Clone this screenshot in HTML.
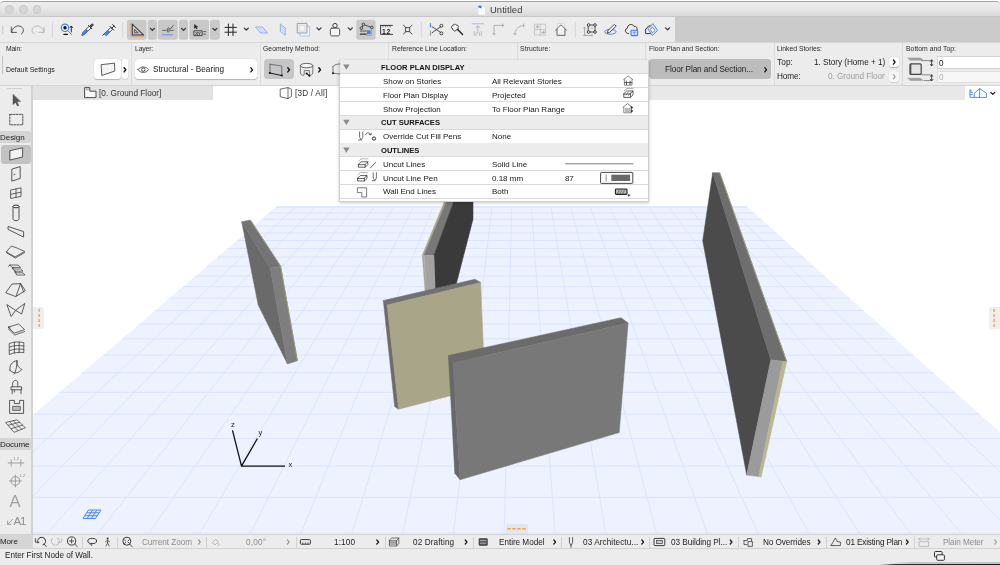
<!DOCTYPE html>
<html><head><meta charset="utf-8"><title>Untitled</title><style>
html,body{margin:0;padding:0}
body{width:1000px;height:565px;overflow:hidden;position:relative;background:#fff;-webkit-font-smoothing:antialiased;font-family:"Liberation Sans",sans-serif;color:#222}
div,span,svg{position:absolute;box-sizing:border-box}
svg{will-change:transform}
.t{white-space:nowrap;line-height:1;letter-spacing:0;will-change:transform}
.sep{width:1px;background:#cfcfcf}
</style></head><body>
<svg width="1000" height="565" viewBox="0 0 1000 565" style="left:0;top:0">
<defs><clipPath id="cv"><rect x="33" y="100" width="967" height="434"/></clipPath></defs>
<g clip-path="url(#cv)">
<polygon points="277.071,206 746.34,206 1188.27,600 -182.909,600" fill="#edf2fe"/>
<path d="M-208.73,622.118 H1213.08 M-152.632,574.066 H1159.19 M-104.589,532.915 H1113.03 M-62.9846,497.278 H1073.06 M-26.6047,466.116 H1038.1 M5.47659,438.637 H1007.28 M33.9785,414.223 H979.896 M59.4685,392.389 H955.406 M82.4,372.747 H933.374 M103.14,354.982 H913.448 M121.988,338.838 H895.339 M139.192,324.102 H878.81 M154.957,310.598 H863.663 M169.458,298.177 H849.731 M182.84,286.714 H836.874 M195.228,276.103 H824.972 M206.729,266.252 H813.923 M217.435,257.082 H803.637 M227.425,248.525 H794.039 M236.769,240.521 H785.061 M245.528,233.019 H776.646 M253.754,225.972 H768.742 M261.496,219.341 H761.304 M268.794,213.089 H754.292 M275.687,207.186 H747.67 M296.624,206 L-125.776,600 M316.176,206 L-68.6433,600 M335.729,206 L-11.5107,600 M355.282,206 L45.6219,600 M374.835,206 L102.755,600 M394.388,206 L159.887,600 M413.941,206 L217.02,600 M433.494,206 L274.152,600 M453.047,206 L331.285,600 M472.6,206 L388.418,600 M492.153,206 L445.55,600 M511.705,206 L502.683,600 M531.258,206 L559.816,600 M550.811,206 L616.948,600 M570.364,206 L674.081,600 M589.917,206 L731.213,600 M609.47,206 L788.346,600 M629.023,206 L845.479,600 M648.576,206 L902.611,600 M668.129,206 L959.744,600 M687.682,206 L1016.88,600 M707.235,206 L1074.01,600 M726.787,206 L1131.14,600" stroke="#d9e2fc" stroke-width="0.85" fill="none"/>
<path d="M277.071,206.5 H746.34" stroke="#dfe7fc" stroke-width="1" fill="none"/>
<polygon points="448.6,195 456.1,195 434,255.2 423.3,255.2" fill="#787878" stroke="#787878" stroke-width="0.5" stroke-linejoin="round" />
<polygon points="447.1,195 448.8,195 423.6,255.2 426.8,295 425.4,295 422.3,255.2" fill="#a9a587" stroke="#a9a587" stroke-width="0.5" stroke-linejoin="round" />
<polygon points="456.1,195 473,195 473,219.2 456.4,283.4 435.3,294 434,255.2" fill="#3a3a3a" stroke="#3a3a3a" stroke-width="0.5" stroke-linejoin="round" />
<polygon points="424.3,255.5 433.8,255.5 435.3,294 426.6,295" fill="#a2a2a2" stroke="#a2a2a2" stroke-width="0.5" stroke-linejoin="round" />
<polygon points="241.7,221.7 270.3,268.5 287.5,364 258.2,305" fill="#6a6a6a" stroke="#6a6a6a" stroke-width="0.5" stroke-linejoin="round" />
<polygon points="241.7,221.7 250.3,220 280.5,266 270.3,268.5" fill="#747474" stroke="#747474" stroke-width="0.5" stroke-linejoin="round" />
<polygon points="270.3,268.5 280.5,266 297.4,360.8 287.5,364" fill="#7e7e7e" stroke="#7e7e7e" stroke-width="0.5" stroke-linejoin="round" />
<path d="M250.3,220 L280.5,266 L297.4,360.8" stroke="#9c9877" stroke-width="1" fill="none"/>
<polygon points="383.3,300.5 474.8,279.3 480.9,282.5 387.2,305" fill="#717171" stroke="#717171" stroke-width="0.5" stroke-linejoin="round" />
<polygon points="383.3,300.5 387.2,305 398.6,409.3 394.7,406.6" fill="#6c6c6c" stroke="#6c6c6c" stroke-width="0.5" stroke-linejoin="round" />
<polygon points="387.2,305 480.6,282.5 485,386.7 398.6,409.3" fill="#a8a588" stroke="#a8a588" stroke-width="0.5" stroke-linejoin="round" />
<polygon points="448.4,355.5 621,317.7 628.1,323 453,363" fill="#6b6b6b" stroke="#6b6b6b" stroke-width="0.5" stroke-linejoin="round" />
<polygon points="448.4,355.5 453,363 460.1,479.7 454.8,473.3" fill="#686868" stroke="#686868" stroke-width="0.5" stroke-linejoin="round" />
<polygon points="453,363 628.1,323 619.2,432.6 460.1,479.7" fill="#787878" stroke="#787878" stroke-width="0.5" stroke-linejoin="round" />
<polygon points="712.7,172.7 770.8,359.8 746.7,475.1 702.7,240.7" fill="#4b4b4b" stroke="#4b4b4b" stroke-width="0.5" stroke-linejoin="round" />
<polygon points="712.7,172.7 719.7,172.7 786.7,361.6 770.8,359.8" fill="#6e6e6e" stroke="#6e6e6e" stroke-width="0.5" stroke-linejoin="round" />
<polygon points="770.8,359.8 782.8,361.6 758.7,476.6 746.7,475.1" fill="#9b9b9b" stroke="#9b9b9b" stroke-width="0.5" stroke-linejoin="round" />
<polygon points="782.8,361.6 786.7,361.6 761.1,477.2 758.7,476.6" fill="#b9b690" stroke="#b9b690" stroke-width="0.5" stroke-linejoin="round" />
<path d="M719.7,172.7 L786.7,361.6" stroke="#a39f7c" stroke-width="1" fill="none"/>
<path d="M232.5,430.4 L241.5,466.1 L257.4,438.5 M241.5,466.1 H285" stroke="#111" stroke-width="1.3" fill="none" stroke-linejoin="round"/>
<text x="231" y="426.5" font-size="7.5" fill="#222" font-family='"Liberation Sans", sans-serif'>z</text>
<text x="258.5" y="435" font-size="7.5" fill="#222" font-family='"Liberation Sans", sans-serif'>y</text>
<text x="288.5" y="466.5" font-size="7.5" fill="#222" font-family='"Liberation Sans", sans-serif'>x</text>
<path d="M88.5,510 H101 L95.5,518.5 H83 Z M92.6,510 L87.1,518.5 M96.8,510 L91.3,518.5 M86.7,512.8 H99.2 M84.8,515.7 H97.3" stroke="#3f7df0" stroke-width="0.9" fill="#e6eeff"/>
</g>
</svg>
<div style="left:33px;top:307px;width:11.1px;height:22px;background:#eeeeee;border-radius:0 2.5px 2.5px 0"></div>
<svg width="12" height="24" style="left:33px;top:306px"><path d="M6.2,3 V22" stroke="#f2a456" stroke-width="1.4" stroke-dasharray="3,2" fill="none"/></svg>
<div style="left:989.1px;top:307px;width:10.9px;height:22px;background:#eeeeee;border-radius:2.5px 0 0 2.5px"></div>
<svg width="12" height="24" style="left:988px;top:306px"><path d="M6.1,3 V22" stroke="#f2a456" stroke-width="1.4" stroke-dasharray="3,2" fill="none"/></svg>
<div style="left:505.9px;top:523.8px;width:22px;height:10.4px;background:#e1e6ef;border-radius:2.5px 2.5px 0 0"></div>
<svg width="26" height="12" style="left:504px;top:522px"><path d="M3.3,6.75 H22" stroke="#f2a456" stroke-width="1.3" stroke-dasharray="3.5,1.45" fill="none"/></svg>
<div style="left:0px;top:1px;width:1000px;height:16.2px;background:linear-gradient(#eeeeee,#e5e5e5 55%,#d9d9d9);border-top:1.2px solid #98a5bf;border-radius:4px 4px 0 0;border-bottom:1px solid #c6c6c6"></div>
<div style="left:5.3px;top:5.3px;width:8.4px;height:8.4px;background:#d6d6d6;border-radius:50%;border:0.5px solid #cacaca"></div>
<div style="left:19.2px;top:5.3px;width:8.4px;height:8.4px;background:#d6d6d6;border-radius:50%;border:0.5px solid #cacaca"></div>
<div style="left:33.1px;top:5.3px;width:8.4px;height:8.4px;background:#d6d6d6;border-radius:50%;border:0.5px solid #cacaca"></div>
<svg width="10" height="11" style="left:476.5px;top:4.5px"><path d="M1,0.5 H6 L8.5,3 V10 H1 Z" fill="#fafafa" stroke="#d8d8d8" stroke-width="0.5"/><path d="M1.2,0.8 H4.5 V3.6 L1.2,2.2Z" fill="#3b6fe0"/></svg>
<div style="left:0px;top:17.2px;width:675px;height:25.4px;background:#ececec;"></div>
<div style="left:675px;top:16.8px;width:325px;height:25.8px;background:#cbcbcb;"></div>
<div style="left:0px;top:42.3px;width:1000px;height:0.8px;background:#d6d6d6;"></div>
<div style="left:0px;top:43px;width:1000px;height:42.2px;background:#ececec;"></div>
<div style="left:0px;top:85px;width:1000px;height:0.8px;background:#d4d4d4;"></div>
<div style="left:0px;top:86px;width:33px;height:15px;background:#ececec;"></div>
<div style="left:33px;top:85.8px;width:180px;height:14.4px;background:#e2e2e2;"></div>
<div style="left:213px;top:86px;width:130px;height:14px;background:#ffffff;"></div>
<div style="left:648px;top:86px;width:317px;height:14px;background:#e8e8e8;"></div>
<div style="left:965px;top:86px;width:35px;height:14px;background:#ffffff;"></div>
<div style="left:0px;top:86px;width:32px;height:463px;background:#ececec;"></div>
<div style="left:31px;top:86px;width:2px;height:448px;background:#d2d2d2;"></div>
<div style="left:0px;top:534px;width:1000px;height:15px;background:#ececec;border-top:1px solid #d2d2d2"></div>
<div style="left:0px;top:548.4px;width:1000px;height:16.6px;background:#ececec;border-top:1px solid #d2d2d2"></div>
<div style="left:880px;top:563.6px;width:120px;height:1.4px;background:linear-gradient(to right,rgba(30,30,30,0),rgba(30,30,30,.9) 12%,#1a1a1a);"></div>
<div style="left:890px;top:562.4px;width:110px;height:1.2px;background:linear-gradient(to right,rgba(120,120,120,0),rgba(120,120,120,.35) 20%);"></div>
<span class="t" style="left:490px;top:5.295px;font-size:9.4px;color:#3c3c3c;font-weight:normal;letter-spacing:0.079px;">Untitled</span>
<span class="t" style="left:6.25px;top:45.89px;font-size:6.8px;color:#2a2a2a;font-weight:normal;letter-spacing:-0.175px;">Main:</span>
<span class="t" style="left:135px;top:45.89px;font-size:6.8px;color:#2a2a2a;font-weight:normal;letter-spacing:-0.150px;">Layer:</span>
<span class="t" style="left:263px;top:45.89px;font-size:6.8px;color:#2a2a2a;font-weight:normal;letter-spacing:0.043px;">Geometry Method:</span>
<span class="t" style="left:391.75px;top:45.89px;font-size:6.8px;color:#2a2a2a;font-weight:normal;letter-spacing:-0.025px;">Reference Line Location:</span>
<span class="t" style="left:520px;top:45.89px;font-size:6.8px;color:#2a2a2a;font-weight:normal;letter-spacing:0.102px;">Structure:</span>
<span class="t" style="left:648.75px;top:45.89px;font-size:6.8px;color:#2a2a2a;font-weight:normal;letter-spacing:-0.008px;">Floor Plan and Section:</span>
<span class="t" style="left:777px;top:45.89px;font-size:6.8px;color:#2a2a2a;font-weight:normal;letter-spacing:0.001px;">Linked Stories:</span>
<span class="t" style="left:905.5px;top:45.89px;font-size:6.8px;color:#2a2a2a;font-weight:normal;letter-spacing:0.041px;">Bottom and Top:</span>
<div style="left:130.8px;top:43px;width:1px;height:42px;background:#dcdcdc;"></div>
<div style="left:259.8px;top:43px;width:1px;height:42px;background:#dcdcdc;"></div>
<div style="left:388.2px;top:43px;width:1px;height:42px;background:#dcdcdc;"></div>
<div style="left:516.8px;top:43px;width:1px;height:42px;background:#dcdcdc;"></div>
<div style="left:645.4px;top:43px;width:1px;height:42px;background:#dcdcdc;"></div>
<div style="left:774px;top:43px;width:1px;height:42px;background:#dcdcdc;"></div>
<div style="left:902.2px;top:43px;width:1px;height:42px;background:#dcdcdc;"></div>
<div style="left:2px;top:56px;width:1px;height:18px;background:#c4c4c4;"></div>
<span class="t" style="left:6.25px;top:66.8325px;font-size:6.9px;color:#222;font-weight:normal;letter-spacing:0.003px;">Default Settings</span>
<div style="left:94px;top:59.3px;width:27.2px;height:20px;background:#ffffff;border-radius:3.5px;box-shadow:0 0.5px 1px rgba(0,0,0,.25)"></div>
<div style="left:121.8px;top:59.3px;width:6.4px;height:20px;background:#ffffff;border-radius:2.5px;box-shadow:0 0.5px 1px rgba(0,0,0,.25)"></div>
<div style="left:134.6px;top:59.3px;width:122px;height:20px;background:#ffffff;border-radius:3.5px;box-shadow:0 0.5px 1px rgba(0,0,0,.25)"></div>
<span class="t" style="left:153px;top:66.085px;font-size:8.2px;color:#222;font-weight:normal;letter-spacing:0.031px;">Structural - Bearing</span>
<div style="left:263.5px;top:59.2px;width:30px;height:20px;background:#c6c6c8;border-radius:3.5px"></div>
<div style="left:648.5px;top:59.2px;width:122.5px;height:20px;background:#bcbcbc;border-radius:3.5px"></div>
<span class="t" style="left:664.5px;top:65.885px;font-size:8.2px;color:#222;font-weight:normal;letter-spacing:-0.072px;">Floor Plan and Section...</span>
<span class="t" style="left:777px;top:59.185px;font-size:8.2px;color:#222;font-weight:normal;letter-spacing:0.126px;">Top:</span>
<span class="t" style="left:813.75px;top:59.185px;font-size:8.2px;color:#222;font-weight:normal;letter-spacing:-0.027px;">1. Story (Home + 1)</span>
<span class="t" style="left:777px;top:73.385px;font-size:8.2px;color:#222;font-weight:normal;letter-spacing:-0.080px;">Home:</span>
<span class="t" style="left:828.25px;top:73.385px;font-size:8.2px;color:#9c9c9c;font-weight:normal;letter-spacing:-0.045px;">0. Ground Floor</span>
<div style="left:888.5px;top:56.5px;width:10.5px;height:10.5px;background:#ffffff;border-radius:3px;box-shadow:0 0.5px 1px rgba(0,0,0,.25)"></div>
<div style="left:888.5px;top:71px;width:10.5px;height:10.5px;background:#f6f6f6;border-radius:3px;box-shadow:0 0.5px 1px rgba(0,0,0,.12)"></div>
<div style="left:936.5px;top:56px;width:64px;height:12.5px;background:#ffffff;border:1px solid #d4d4d4;border-right:none"></div>
<div style="left:936.5px;top:70.5px;width:64px;height:12px;background:#f7f7f7;border:1px solid #dedede;border-right:none"></div>
<span class="t" style="left:938.75px;top:59.685px;font-size:8.2px;color:#222;font-weight:normal;letter-spacing:-0.310px;">0</span>
<span class="t" style="left:938.75px;top:74.085px;font-size:8.2px;color:#b0b0b0;font-weight:normal;letter-spacing:-0.310px;">0</span>
<span class="t" style="left:98.75px;top:89.785px;font-size:8.2px;color:#333;font-weight:normal;letter-spacing:0.031px;">[0. Ground Floor]</span>
<span class="t" style="left:294.5px;top:89.785px;font-size:8.2px;color:#333;font-weight:normal;letter-spacing:0.197px;">[3D / All]</span>
<div style="left:0px;top:130.5px;width:31px;height:12.5px;background:#d5d5d5;border-radius:0 2px 2px 0"></div>
<span class="t" style="left:0.3px;top:133.5px;font-size:8px;color:#222;font-weight:normal;letter-spacing:-0.034px;">Design</span>
<div style="left:1px;top:145px;width:30px;height:18.5px;background:#c2c2c2;border-radius:3px"></div>
<div style="left:0px;top:437.5px;width:31px;height:12.5px;background:#d5d5d5;border-radius:0 2px 2px 0"></div>
<span class="t" style="left:0.3px;top:440.5px;font-size:8px;color:#222;font-weight:normal;letter-spacing:-0.065px;">Docume</span>
<div style="left:0px;top:535px;width:32.5px;height:14px;background:#d5d5d5;"></div>
<span class="t" style="left:0.3px;top:538.2px;font-size:8px;color:#222;font-weight:normal;letter-spacing:-0.131px;">More</span>
<div style="left:7px;top:88px;width:15px;height:1px;background:#cfcfcf;"></div>
<span class="t" style="left:142px;top:539.085px;font-size:8.2px;color:#8c8c8c;font-weight:normal;letter-spacing:-0.048px;">Current Zoom</span>
<span class="t" style="left:246px;top:539.085px;font-size:8.2px;color:#8c8c8c;font-weight:normal;letter-spacing:0.203px;">0,00°</span>
<span class="t" style="left:333.75px;top:539.085px;font-size:8.2px;color:#222;font-weight:normal;letter-spacing:0.146px;">1:100</span>
<span class="t" style="left:412.5px;top:539.085px;font-size:8.2px;color:#222;font-weight:normal;letter-spacing:0.104px;">02 Drafting</span>
<span class="t" style="left:499px;top:539.085px;font-size:8.2px;color:#222;font-weight:normal;letter-spacing:-0.044px;">Entire Model</span>
<span class="t" style="left:583.25px;top:539.085px;font-size:8.2px;color:#222;font-weight:normal;letter-spacing:0.079px;">03 Architectu...</span>
<span class="t" style="left:671.25px;top:539.085px;font-size:8.2px;color:#222;font-weight:normal;letter-spacing:-0.043px;">03 Building Pl...</span>
<span class="t" style="left:762.5px;top:539.085px;font-size:8.2px;color:#222;font-weight:normal;letter-spacing:-0.067px;">No Overrides</span>
<span class="t" style="left:846.25px;top:539.085px;font-size:8.2px;color:#222;font-weight:normal;letter-spacing:-0.159px;">01 Existing Plan</span>
<span class="t" style="left:942.5px;top:539.085px;font-size:8.2px;color:#8c8c8c;font-weight:normal;letter-spacing:-0.088px;">Plain Meter</span>
<div style="left:82px;top:537px;width:1px;height:11px;background:#d0d0d0;"></div>
<div style="left:116.5px;top:537px;width:1px;height:11px;background:#d0d0d0;"></div>
<div style="left:206px;top:537px;width:1px;height:11px;background:#d0d0d0;"></div>
<div style="left:295.5px;top:537px;width:1px;height:11px;background:#d0d0d0;"></div>
<div style="left:384.5px;top:537px;width:1px;height:11px;background:#d0d0d0;"></div>
<div style="left:473px;top:537px;width:1px;height:11px;background:#d0d0d0;"></div>
<div style="left:561px;top:537px;width:1px;height:11px;background:#d0d0d0;"></div>
<div style="left:649px;top:537px;width:1px;height:11px;background:#d0d0d0;"></div>
<div style="left:737.5px;top:537px;width:1px;height:11px;background:#d0d0d0;"></div>
<div style="left:825.75px;top:537px;width:1px;height:11px;background:#d0d0d0;"></div>
<div style="left:913.75px;top:537px;width:1px;height:11px;background:#d0d0d0;"></div>
<span class="t" style="left:5px;top:552.485px;font-size:8.2px;color:#222;font-weight:normal;letter-spacing:-0.040px;">Enter First Node of Wall.</span>
<div style="left:338.8px;top:59.5px;width:309.8px;height:142.5px;background:#ffffff;border:1px solid #cfcfcf;box-shadow:0 1px 3px rgba(0,0,0,.22)"></div>
<div style="left:339.8px;top:60.3px;width:307.8px;height:13.53px;background:#ececec;"></div>
<span class="t" style="left:381.3px;top:64.0565px;font-size:7.58px;color:#111;font-weight:bold;letter-spacing:0.000px;">FLOOR PLAN DISPLAY</span>
<div style="left:339.8px;top:73.43px;width:307.8px;height:0.9px;background:#d9d9d9;"></div>
<span class="t" style="left:382.9px;top:77.845px;font-size:8px;color:#151515;font-weight:normal;letter-spacing:0.000px;">Show on Stories</span>
<span class="t" style="left:492.4px;top:77.845px;font-size:8px;color:#151515;font-weight:normal;letter-spacing:-0.000px;">All Relevant Stories</span>
<div style="left:339.8px;top:87.26px;width:307.8px;height:0.9px;background:#d9d9d9;"></div>
<span class="t" style="left:382.9px;top:91.675px;font-size:8px;color:#151515;font-weight:normal;letter-spacing:0.000px;">Floor Plan Display</span>
<span class="t" style="left:492.4px;top:91.675px;font-size:8px;color:#151515;font-weight:normal;letter-spacing:-0.000px;">Projected</span>
<div style="left:339.8px;top:101.09px;width:307.8px;height:0.9px;background:#d9d9d9;"></div>
<span class="t" style="left:382.9px;top:105.505px;font-size:8px;color:#151515;font-weight:normal;letter-spacing:-0.000px;">Show Projection</span>
<span class="t" style="left:492.4px;top:105.505px;font-size:8px;color:#151515;font-weight:normal;letter-spacing:-0.000px;">To Floor Plan Range</span>
<div style="left:339.8px;top:114.92px;width:307.8px;height:0.9px;background:#d9d9d9;"></div>
<div style="left:339.8px;top:115.62px;width:307.8px;height:13.53px;background:#ececec;"></div>
<span class="t" style="left:381.3px;top:119.377px;font-size:7.58px;color:#111;font-weight:bold;letter-spacing:0.000px;">CUT SURFACES</span>
<div style="left:339.8px;top:128.75px;width:307.8px;height:0.9px;background:#d9d9d9;"></div>
<span class="t" style="left:382.9px;top:133.165px;font-size:8px;color:#151515;font-weight:normal;letter-spacing:0.000px;">Override Cut Fill Pens</span>
<span class="t" style="left:492.4px;top:133.165px;font-size:8px;color:#151515;font-weight:normal;letter-spacing:-0.000px;">None</span>
<div style="left:339.8px;top:142.58px;width:307.8px;height:0.9px;background:#d9d9d9;"></div>
<div style="left:339.8px;top:143.28px;width:307.8px;height:13.53px;background:#ececec;"></div>
<span class="t" style="left:381.3px;top:147.037px;font-size:7.58px;color:#111;font-weight:bold;letter-spacing:0.000px;">OUTLINES</span>
<div style="left:339.8px;top:156.41px;width:307.8px;height:0.9px;background:#d9d9d9;"></div>
<span class="t" style="left:382.9px;top:160.825px;font-size:8px;color:#151515;font-weight:normal;letter-spacing:-0.000px;">Uncut Lines</span>
<span class="t" style="left:492.4px;top:160.825px;font-size:8px;color:#151515;font-weight:normal;letter-spacing:-0.000px;">Solid Line</span>
<div style="left:339.8px;top:170.24px;width:307.8px;height:0.9px;background:#d9d9d9;"></div>
<span class="t" style="left:382.9px;top:174.655px;font-size:8px;color:#151515;font-weight:normal;letter-spacing:-0.000px;">Uncut Line Pen</span>
<span class="t" style="left:492.4px;top:174.655px;font-size:8px;color:#151515;font-weight:normal;letter-spacing:-0.000px;">0.18 mm</span>
<div style="left:339.8px;top:184.07px;width:307.8px;height:0.9px;background:#d9d9d9;"></div>
<span class="t" style="left:382.9px;top:188.485px;font-size:8px;color:#151515;font-weight:normal;letter-spacing:-0.000px;">Wall End Lines</span>
<span class="t" style="left:492.4px;top:188.485px;font-size:8px;color:#151515;font-weight:normal;letter-spacing:0.000px;">Both</span>
<div style="left:339.8px;top:197.9px;width:307.8px;height:0.9px;background:#d9d9d9;"></div>
<span class="t" style="left:564.5px;top:174.655px;font-size:8px;color:#151515;font-weight:normal;letter-spacing:-0.199px;">87</span>
<svg width="1000" height="565" viewBox="0 0 1000 565" style="left:0;top:0">
<rect x="126.9" y="19.8" width="19.6" height="20" rx="2.5" fill="#c9c9c9"/>
<rect x="147.75" y="19.8" width="9.15" height="20" rx="2.5" fill="#c9c9c9"/>
<rect x="157.9" y="19.8" width="19.85" height="20" rx="2.5" fill="#c9c9c9"/>
<rect x="179" y="19.8" width="9" height="20" rx="2.5" fill="#c9c9c9"/>
<rect x="189.4" y="19.8" width="19.6" height="20" rx="2.5" fill="#c9c9c9"/>
<rect x="210" y="19.8" width="9.75" height="20" rx="2.5" fill="#c9c9c9"/>
<rect x="356.25" y="19.8" width="19.35" height="20" rx="2.5" fill="#c9c9c9"/>
<path d="M2.75,25.6 V34.4" stroke="#c4c4c4" stroke-width="0.86" fill="none" stroke-linecap="round" stroke-linejoin="round" />
<path d="M52.5,22.5 V37" stroke="#d2d2d2" stroke-width="0.86" fill="none" stroke-linecap="round" stroke-linejoin="round" />
<path d="M122.6,22.5 V37" stroke="#d2d2d2" stroke-width="0.86" fill="none" stroke-linecap="round" stroke-linejoin="round" />
<path d="M421.25,22.5 V37" stroke="#d2d2d2" stroke-width="0.86" fill="none" stroke-linecap="round" stroke-linejoin="round" />
<path d="M575.3,22.5 V37" stroke="#d2d2d2" stroke-width="0.86" fill="none" stroke-linecap="round" stroke-linejoin="round" />
<path d="M11.3,27 V32.4 H16.4 M11.6,32 C12.6,27.6 16.6,25 20,26.2 C24,27.6 24.6,31.6 21.4,34" stroke="#444" stroke-width="0.9" fill="none" stroke-linecap="round" stroke-linejoin="round" />
<path d="M44.1,27 V32.4 H39 M43.8,32 C42.8,27.6 38.8,25 35.4,26.2 C31.4,27.6 30.8,31.6 34,34" stroke="#b4b4b4" stroke-width="0.9" fill="none" stroke-linecap="round" stroke-linejoin="round" />
<circle cx="65" cy="27.8" r="3.7" fill="none" stroke="#3f7df0" stroke-width="1.1"/>
<circle cx="65" cy="27.8" r="1.7" fill="#111"/>
<path d="M67.8,30.6 L71.6,34.6" stroke="#3f7df0" stroke-width="0.95" fill="none" stroke-linecap="round" stroke-linejoin="round" />
<path d="M71.3,26.3 V32 M70,27.6 L71.3,26 L72.6,27.6" stroke="#111" stroke-width="0.86" fill="none" stroke-linecap="round" stroke-linejoin="round" />
<path d="M63.8,34.3 H67.5" stroke="#111" stroke-width="1.2" fill="none" stroke-linecap="round" stroke-linejoin="round" />
<path d="M82,35 L83,32.4 L89.2,26.2 L91,28 L84.8,34.2 Z" stroke="#2a2a2a" stroke-width="0.86" fill="#ffffff" stroke-linecap="round" stroke-linejoin="round" />
<path d="M82.3,34.8 L83.2,32.6 L86.6,29.2 L88.2,30.8 L84.8,34.2 Z" stroke="#3f7df0" stroke-width="0.52" fill="#3f7df0" stroke-linecap="round" stroke-linejoin="round" />
<path d="M88.4,25.4 L91.8,28.8 M89.6,26.4 L91.6,24.2 C92.4,23.3 93.8,24.7 92.9,25.5 L90.8,27.6" stroke="#2a2a2a" stroke-width="0.95" fill="#555" stroke-linecap="round" stroke-linejoin="round" />
<path d="M102.6,35.4 L105,33 M104.6,33.6 L110.8,27.4 L112.6,29.2 L106.4,35.4 Z" stroke="#2a2a2a" stroke-width="0.86" fill="#ffffff" stroke-linecap="round" stroke-linejoin="round" />
<path d="M105,33.4 L108.2,30.2 L109.8,31.8 L106.6,35 Z" stroke="#3f7df0" stroke-width="0.52" fill="#3f7df0" stroke-linecap="round" stroke-linejoin="round" />
<path d="M110,26.4 L113.6,30 M111.8,28.2 L114,26 M112.6,24.6 L115.4,27.4" stroke="#2a2a2a" stroke-width="0.95" fill="none" stroke-linecap="round" stroke-linejoin="round" />
<path d="M132.2,24 V35 H143.6 Z" stroke="#2a2a2a" stroke-width="1.03" fill="none" stroke-linecap="round" stroke-linejoin="round" />
<path d="M134.6,29.6 V32.8 H137.8 Z" stroke="#2a2a2a" stroke-width="0.69" fill="none" stroke-linecap="round" stroke-linejoin="round" />
<path d="M131,23.4 V36.2 H144" stroke="#f0903a" stroke-width="0.86" fill="none" stroke-linecap="round" stroke-linejoin="round" stroke-dasharray="1.2,1.2"/>
<path d="M150.4,28.4 l2,2 l2,-2" stroke="#333" stroke-width="1.3" fill="none" stroke-linecap="round" stroke-linejoin="round"/>
<path d="M162.6,30.3 H166.4 M167.6,28.6 V32 M169,28.6 V32 M170,30.3 H173.4" stroke="#555" stroke-width="0.86" fill="none" stroke-linecap="round" stroke-linejoin="round" />
<path d="M168.6,27.6 L170.4,29 L173.4,25.2" stroke="#555" stroke-width="0.86" fill="none" stroke-linecap="round" stroke-linejoin="round" />
<path d="M162.6,34.8 H173.4" stroke="#3f7df0" stroke-width="0.86" fill="none" stroke-linecap="round" stroke-linejoin="round" stroke-dasharray="1.6,1.1"/>
<path d="M181.5,28.4 l2,2 l2,-2" stroke="#333" stroke-width="1.3" fill="none" stroke-linecap="round" stroke-linejoin="round"/>
<path d="M194.2,30.8 H202.2 V35.6 H194.2 Z" stroke="#333" stroke-width="0.86" fill="none" stroke-linecap="round" stroke-linejoin="round" />
<text x="195.2" y="34.8" font-size="4.4" font-weight="bold" fill="#333" font-family='"Liberation Sans",sans-serif'>XY</text>
<path d="M194.4,24.6 V28.4 L195.6,27.4 L196.6,29 L197.2,28.6 L196.3,27.1 L197.6,26.9 Z" stroke="#222" stroke-width="0.43" fill="#222" stroke-linecap="round" stroke-linejoin="round" />
<path d="M204,31.6 H205.4 M204,34.2 H205.4" stroke="#333" stroke-width="0.86" fill="none" stroke-linecap="round" stroke-linejoin="round" />
<path d="M212.9,28.4 l2,2 l2,-2" stroke="#333" stroke-width="1.3" fill="none" stroke-linecap="round" stroke-linejoin="round"/>
<path d="M228.4,24 V35.6 M233,24 V35.6 M225,27.4 H236.4 M225,32.2 H236.4" stroke="#222" stroke-width="0.99" fill="none" stroke-linecap="round" stroke-linejoin="round" />
<path d="M244.3,28.1 l2,2 l2,-2" stroke="#333" stroke-width="1.3" fill="none" stroke-linecap="round" stroke-linejoin="round"/>
<path d="M256,27 H262.6 L267.6,33 H261 Z" stroke="#79a6f5" stroke-width="0.86" fill="#dfe9fd" stroke-linecap="round" stroke-linejoin="round" />
<path d="M259,29 H263 M260.6,31 H264.6" stroke="#a8c4f8" stroke-width="0.6" fill="none" stroke-linecap="round" stroke-linejoin="round" />
<path d="M280.6,24.2 L285.2,28 V35.4 L280.6,31.6 Z" stroke="#79a6f5" stroke-width="0.86" fill="#dfe9fd" stroke-linecap="round" stroke-linejoin="round" />
<path d="M281.6,27 L284.2,29.2 M281.6,29.4 L284.2,31.6" stroke="#a8c4f8" stroke-width="0.6" fill="none" stroke-linecap="round" stroke-linejoin="round" />
<path d="M300.4,26.2 H309.6 V36 H300.4 Z" stroke="#9cc0fa" stroke-width="0.86" fill="#eef4ff" stroke-linecap="round" stroke-linejoin="round" />
<path d="M297.6,23.4 H307 V33 H297.6 Z" stroke="#9a9a9a" stroke-width="0.95" fill="#ededed" stroke-linecap="round" stroke-linejoin="round" />
<path d="M299.6,25.4 H305 V31 H299.6 Z" stroke="#cfcfcf" stroke-width="0.69" fill="#f4f4f4" stroke-linecap="round" stroke-linejoin="round" />
<path d="M317,27.9 l2,2 l2,-2" stroke="#333" stroke-width="1.3" fill="none" stroke-linecap="round" stroke-linejoin="round"/>
<circle cx="335" cy="25.6" r="2.2" fill="none" stroke="#3c3c3c" stroke-width="1"/>
<path d="M331.8,28.2 H338.2 C339.2,28.2 339.6,28.8 339.6,29.8 V34.4 C339.6,35.4 339,35.9 338,35.9 H332 C331,35.9 330.4,35.4 330.4,34.4 V29.8 C330.4,28.8 330.8,28.2 331.8,28.2 Z" stroke="#3c3c3c" stroke-width="0.86" fill="#f6f6f6" stroke-linecap="round" stroke-linejoin="round" />
<path d="M348.3,27.9 l2,2 l2,-2" stroke="#333" stroke-width="1.3" fill="none" stroke-linecap="round" stroke-linejoin="round"/>
<path d="M361.6,27.8 L363.4,24.6 L371.6,27.4" stroke="#333" stroke-width="0.86" fill="none" stroke-linecap="round" stroke-linejoin="round" />
<circle cx="361.4" cy="28.2" r="1.3" fill="#c9c9c9" stroke="#333" stroke-width="0.9"/>
<circle cx="363.4" cy="24.4" r="1.3" fill="#c9c9c9" stroke="#333" stroke-width="0.9"/>
<circle cx="371.8" cy="27.4" r="1.3" fill="#c9c9c9" stroke="#333" stroke-width="0.9"/>
<path d="M360.4,31 H366.4" stroke="#333" stroke-width="0.77" fill="none" stroke-linecap="round" stroke-linejoin="round" />
<path d="M360.4,34.2 H366.2" stroke="#333" stroke-width="1.2" fill="none" stroke-linecap="round" stroke-linejoin="round" stroke-dasharray="1.2,0.7"/>
<rect x="367" y="30.4" width="3.6" height="3.6" fill="#3f7df0"/>
<path d="M371.4,30 V35 M367,35.2 H371" stroke="#3f7df0" stroke-width="0.6" fill="none" stroke-linecap="round" stroke-linejoin="round" stroke-dasharray="0.9,0.9"/>
<path d="M380.6,25.4 H392.4 M380.6,25.4 V34.4 H392.6" stroke="#333" stroke-width="0.95" fill="none" stroke-linecap="round" stroke-linejoin="round" />
<path d="M383,25.4 V26.8 M385.4,25.4 V26.8 M387.8,25.4 V26.8 M390.2,25.4 V26.8" stroke="#333" stroke-width="0.6" fill="none" stroke-linecap="round" stroke-linejoin="round" />
<text x="382" y="33.6" font-size="6.8" font-weight="bold" letter-spacing="0.6" fill="#222" font-family='"Liberation Sans",sans-serif'>12</text>
<path d="M403.4,25.2 L406,27.6 M412,25.2 L409.4,27.6 M403.4,34 L406,31.6 M412,34 L409.4,31.6" stroke="#333" stroke-width="0.86" fill="none" stroke-linecap="round" stroke-linejoin="round" />
<path d="M405.8,27.6 H409.6 V31.6 H405.8 Z" stroke="#333" stroke-width="0.86" fill="none" stroke-linecap="round" stroke-linejoin="round" />
<path d="M430.4,23.6 V27" stroke="#3f7df0" stroke-width="1.03" fill="none" stroke-linecap="round" stroke-linejoin="round" />
<path d="M430.4,31 V35.6" stroke="#999" stroke-width="1.03" fill="none" stroke-linecap="round" stroke-linejoin="round" />
<path d="M432,26.6 L440.6,32.4 M432,32.8 L440.6,26.8" stroke="#333" stroke-width="0.86" fill="none" stroke-linecap="round" stroke-linejoin="round" />
<circle cx="441.4" cy="33.4" r="1.5" fill="none" stroke="#333" stroke-width="0.9"/>
<circle cx="441.4" cy="25.8" r="1.5" fill="none" stroke="#333" stroke-width="0.9"/>
<path d="M452.2,28.6 C450.6,27.4 451.4,25.6 453,25.8 C453,24 455.4,23.6 456,25.2 C457.6,24.4 459,26 458,27.4 C459,28.6 458,30.2 456.4,29.8 C455.8,31.6 453.6,31.4 453.4,29.8 C452.6,29.8 452.2,29.2 452.2,28.6 Z" stroke="#333" stroke-width="0.86" fill="#f4f4f4" stroke-linecap="round" stroke-linejoin="round" />
<path d="M457.4,29.2 L462.6,34.4" stroke="#222" stroke-width="1.38" fill="none" stroke-linecap="round" stroke-linejoin="round" />
<path d="M472,23.8 H483.6" stroke="#8db4f7" stroke-width="0.86" fill="none" stroke-linecap="round" stroke-linejoin="round" />
<path d="M477.8,26 V33.4 M476,27.8 L477.8,25.8 L479.6,27.8" stroke="#aaa" stroke-width="0.77" fill="none" stroke-linecap="round" stroke-linejoin="round" />
<path d="M474.2,31.4 V35.6 M476,32.6 V35.6 M479.6,32.6 V35.6 M481.4,31.4 V35.6" stroke="#b4b4b4" stroke-width="0.77" fill="none" stroke-linecap="round" stroke-linejoin="round" />
<path d="M494,35 V25.4 H503.6 M502.6,24 V26.8 M492.8,33.8 H495.2" stroke="#a8a8a8" stroke-width="0.86" fill="none" stroke-linecap="round" stroke-linejoin="round" />
<path d="M514.8,35 C514.8,29.6 518.4,25.6 524.6,25.4 M523.4,24 V26.8 M513.6,33.8 H516" stroke="#a8a8a8" stroke-width="0.86" fill="none" stroke-linecap="round" stroke-linejoin="round" />
<path d="M534.8,24.2 H545.6 V35 H534.8 Z M540.2,24.2 V35 M534.8,29.6 H545.6" stroke="#bcbcbc" stroke-width="0.77" fill="none" stroke-linecap="round" stroke-linejoin="round" />
<path d="M537.4,25.4 V28.2 M536,26.8 H538.8 M541.6,32.4 H544.4 M543.2,31 L544.6,32.4 L543.2,33.8" stroke="#9a9a9a" stroke-width="0.69" fill="none" stroke-linecap="round" stroke-linejoin="round" />
<path d="M557.6,23.4 H564.4 V35.2 H557.6 Z" stroke="#d4d4d4" stroke-width="0.77" fill="#f2f2f2" stroke-linecap="round" stroke-linejoin="round" />
<path d="M555.4,30.2 L561,24.8 L566.6,30.2 M557,29.4 V35.4 H565 V29.4" stroke="#555" stroke-width="0.82" fill="none" stroke-linecap="round" stroke-linejoin="round" />
<path d="M588.6,25 H595 V32 H588.6 Z" stroke="#333" stroke-width="0.86" fill="none" stroke-linecap="round" stroke-linejoin="round" />
<circle cx="588.6" cy="25" r="1.35" fill="#ececec" stroke="#333" stroke-width="0.9"/>
<circle cx="595" cy="25" r="1.35" fill="#ececec" stroke="#333" stroke-width="0.9"/>
<circle cx="588.6" cy="32" r="1.35" fill="#ececec" stroke="#333" stroke-width="0.9"/>
<circle cx="595" cy="32" r="1.35" fill="#ececec" stroke="#333" stroke-width="0.9"/>
<path d="M591.6,28.2 H592.4" stroke="#777" stroke-width="0.77" fill="none" stroke-linecap="round" stroke-linejoin="round" />
<path d="M584.6,27.6 V35.4 H592 M583.6,27.8 H585.6 M583.6,35.4 H585.6 M592,34.4 V36.2" stroke="#999" stroke-width="0.77" fill="none" stroke-linecap="round" stroke-linejoin="round" />
<ellipse cx="610.4" cy="31.8" rx="5.6" ry="2.4" fill="none" stroke="#3f7df0" stroke-width="1"/>
<path d="M607.4,32.6 L608,30.4 L614.4,24.4 L616.2,26.2 L609.8,32.2 Z" stroke="#333" stroke-width="0.86" fill="#f4f4f4" stroke-linecap="round" stroke-linejoin="round" />
<path d="M628.6,33.6 C624.8,33.6 624.2,29 627.4,28.2 C627.2,24.4 632.6,23 634,26.4 C636.6,26 637.8,28.4 637,30" stroke="#333" stroke-width="0.95" fill="none" stroke-linecap="round" stroke-linejoin="round" />
<rect x="631" y="30.2" width="6.6" height="5.4" rx="0.8" fill="#cfe0fd" stroke="#3f7df0" stroke-width="1.1"/>
<path d="M633,32.2 H635.8 M634.4,32.2 V34.4" stroke="#3f7df0" stroke-width="0.6" fill="none" stroke-linecap="round" stroke-linejoin="round" />
<path d="M645.6,29.4 L648.6,26 H652 M645.6,29.4 V33.6 H652" stroke="#333" stroke-width="0.95" fill="none" stroke-linecap="round" stroke-linejoin="round" />
<path d="M653,24 L657.6,30.4 L652.4,35.4 L648,29.2 Z" stroke="#3f7df0" stroke-width="0.95" fill="#e4edfe" stroke-linecap="round" stroke-linejoin="round" />
<path d="M652.6,27.2 L655,30.4 L652.6,32.8 L650.4,29.8 Z" stroke="#555" stroke-width="0.69" fill="#f4f4f4" stroke-linecap="round" stroke-linejoin="round" />
<path d="M665.6,27.9 l2,2 l2,-2" stroke="#333" stroke-width="1.3" fill="none" stroke-linecap="round" stroke-linejoin="round"/>
<path d="M101.5,64.6 L114.5,63.2 L114.8,71 L102.2,75.4 Z" stroke="#444" stroke-width="0.86" fill="#f4f4f4" stroke-linecap="round" stroke-linejoin="round" />
<path d="M124.1,67.7 l1.7,2.1 l-1.7,2.1" stroke="#111" stroke-width="1.4" fill="none" stroke-linecap="round" stroke-linejoin="round"/>
<path d="M138,69.7 C140.4,66 146,66 148.6,69.7 C146,73.4 140.4,73.4 138,69.7 Z" stroke="#444" stroke-width="0.86" fill="none" stroke-linecap="round" stroke-linejoin="round" />
<circle cx="143.3" cy="69.7" r="1.7" fill="none" stroke="#444" stroke-width="1"/>
<path d="M250.8,67.7 l1.7,2.1 l-1.7,2.1" stroke="#111" stroke-width="1.3" fill="none" stroke-linecap="round" stroke-linejoin="round"/>
<path d="M270,64.2 L281.8,66 V75.4 M270,64.2 V73" stroke="#555" stroke-width="0.77" fill="none" stroke-linecap="round" stroke-linejoin="round" />
<path d="M269.8,73 L281.8,75.5" stroke="#222" stroke-width="1.12" fill="none" stroke-linecap="round" stroke-linejoin="round" />
<circle cx="269.8" cy="73" r="1.1" fill="#111"/><circle cx="281.8" cy="75.5" r="1.1" fill="#111"/>
<path d="M287.8,67.7 l1.7,2.1 l-1.7,2.1" stroke="#111" stroke-width="1.4" fill="none" stroke-linecap="round" stroke-linejoin="round"/>
<ellipse cx="306.6" cy="65.6" rx="6.2" ry="2.2" fill="#f6f6f6" stroke="#555" stroke-width="0.9"/>
<path d="M300.4,65.6 V73 C301,75.6 304,76 304.2,74.4 V70.6 H309.4 V75 C311,75.4 312.6,74.4 312.8,73 V65.6" stroke="#555" stroke-width="0.77" fill="none" stroke-linecap="round" stroke-linejoin="round" />
<path d="M306.6,73.4 L309.4,75.8" stroke="#111" stroke-width="1.03" fill="none" stroke-linecap="round" stroke-linejoin="round" />
<circle cx="306.6" cy="73.4" r="1" fill="#111"/><circle cx="309.4" cy="75.8" r="1" fill="#111"/>
<path d="M318.8,67.7 l1.7,2.1 l-1.7,2.1" stroke="#111" stroke-width="1.4" fill="none" stroke-linecap="round" stroke-linejoin="round"/>
<path d="M333,66.4 C334,64.4 338,64 340,64 M333,66.4 V73.2 L340,74" stroke="#555" stroke-width="0.77" fill="none" stroke-linecap="round" stroke-linejoin="round" />
<circle cx="333" cy="73.2" r="1" fill="#111"/>
<path d="M764.8,67.7 l1.7,2.1 l-1.7,2.1" stroke="#111" stroke-width="1.3" fill="none" stroke-linecap="round" stroke-linejoin="round"/>
<path d="M893.4,60 l1.7,2.1 l-1.7,2.1" stroke="#111" stroke-width="1.3" fill="none" stroke-linecap="round" stroke-linejoin="round"/>
<path d="M893.4,74.6 l1.7,2.1 l-1.7,2.1" stroke="#a0a0a0" stroke-width="1.2" fill="none" stroke-linecap="round" stroke-linejoin="round"/>
<path d="M908,58 H920.6 L923,60.2 H910.4 Z" stroke="#8a8f94" stroke-width="0.43" fill="#9aa0a5" stroke-linecap="round" stroke-linejoin="round" />
<path d="M908,78.2 H920.6 L923,80.4 H910.4 Z" stroke="#8a8f94" stroke-width="0.43" fill="#9aa0a5" stroke-linecap="round" stroke-linejoin="round" />
<rect x="910" y="63.8" width="11.2" height="10.6" rx="1" fill="#e4e4e4" stroke="#444" stroke-width="1.2"/>
<path d="M910.6,64.4 V73.8" stroke="#555" stroke-width="1.55" fill="none" stroke-linecap="round" stroke-linejoin="round" />
<path d="M922,60.6 H931 M922,74.8 H931 M924,80.6 H931" stroke="#555" stroke-width="0.69" fill="none" stroke-linecap="round" stroke-linejoin="round" stroke-dasharray="1,0.8"/>
<path d="M931.6,60 V65.6 M930.4,61.4 L931.6,59.8 L932.8,61.4 M930.4,64.4 L931.6,66 L932.8,64.4" stroke="#222" stroke-width="0.77" fill="none" stroke-linecap="round" stroke-linejoin="round" />
<path d="M931.6,75 V80.6 M930.4,76.4 L931.6,74.8 L932.8,76.4 M930.4,79.4 L931.6,81 L932.8,79.4" stroke="#222" stroke-width="0.77" fill="none" stroke-linecap="round" stroke-linejoin="round" />
<path d="M84.6,97.2 V87.6 H89.8 V91.2 H96 V97.2 Z" stroke="#333" stroke-width="0.86" fill="#f8f8f8" stroke-linecap="round" stroke-linejoin="round" />
<path d="M86.4,88.6 V89.8 H88.2 V88.6" stroke="#555" stroke-width="0.52" fill="none" stroke-linecap="round" stroke-linejoin="round" />
<path d="M280.6,89 L288,87.6 L291.4,89.2 V96.6 L288,98.6 L280.6,96.8 Z M288,87.6 V98.6" stroke="#444" stroke-width="0.77" fill="none" stroke-linecap="round" stroke-linejoin="round" />
<path d="M974.6,93 L979.6,88.6 L986.4,93.2 V97.4 H974.6 Z M979.6,88.6 V97.4" stroke="#3f7df0" stroke-width="0.86" fill="none" stroke-linecap="round" stroke-linejoin="round" />
<path d="M970,90 V97.4 H974 M970,90 L971.6,91 M970,92.4 H972.4 M970,94.6 H972.4" stroke="#3f7df0" stroke-width="0.86" fill="none" stroke-linecap="round" stroke-linejoin="round" />
<path d="M990.8,92.4 l2,2 l2,-2" stroke="#222" stroke-width="1.3" fill="none" stroke-linecap="round" stroke-linejoin="round"/>
<path d="M343.2,64.515 h6.4 l-3.2,5.2 Z" fill="#8a8a8a"/>
<path d="M343.2,119.835 h6.4 l-3.2,5.2 Z" fill="#8a8a8a"/>
<path d="M343.2,147.495 h6.4 l-3.2,5.2 Z" fill="#8a8a8a"/>
<path d="M623.6,79.6 l4.6,-3.6 l4.6,3.6 M624.4,79.6 v5.6 h7.6 v-5.6" stroke="#555" stroke-width="0.69" fill="none" stroke-linecap="round" stroke-linejoin="round" />
<path d="M624.6,82.6 H631.8 M626.4,81 V84.6 M630,81 V84.6" stroke="#333" stroke-width="0.77" fill="none" stroke-linecap="round" stroke-linejoin="round" />
<path d="M623.8,93.8 L626.6,91 H633 L630.4,93.8 Z M623.8,93.8 V97.4 H630.4 V93.8 M630.4,97.4 L633,94.8 V91" stroke="#333" stroke-width="0.77" fill="none" stroke-linecap="round" stroke-linejoin="round" />
<path d="M624.4,90.6 L627,88.4 H633" stroke="#666" stroke-width="0.6" fill="none" stroke-linecap="round" stroke-linejoin="round" stroke-dasharray="1,0.8"/>
<path d="M626,95 L628,92.4 M628.4,95.4 L630.2,93" stroke="#333" stroke-width="0.6" fill="none" stroke-linecap="round" stroke-linejoin="round" />
<path d="M623,107.2 l4.6,-3.6 l4.6,3.6 M623.8,107.2 v5.6 h7.6 v-5.6" stroke="#555" stroke-width="0.69" fill="none" stroke-linecap="round" stroke-linejoin="round" />
<path d="M625.4,109 H629.6 M625.4,111 H629.6" stroke="#333" stroke-width="0.69" fill="none" stroke-linecap="round" stroke-linejoin="round" />
<path d="M631.2,106.6 l1.8,1 l-1.8,1 Z M631.2,110 l1.8,1 l-1.8,1 Z" stroke="#222" stroke-width="0.43" fill="#222" stroke-linecap="round" stroke-linejoin="round" />
<path d="M359.6,131.965 v5.4 l1.6,2.4 l1.6,-2.4 v-5.4 M361.2,139.965 h-2.6" stroke="#444" stroke-width="0.77" fill="none" stroke-linecap="round" stroke-linejoin="round" />
<path d="M365.4,134.8 C366.4,132 369.6,132 370.6,134.6 M369.2,134.4 L370.8,135 L371.4,133.2" stroke="#444" stroke-width="0.77" fill="none" stroke-linecap="round" stroke-linejoin="round" />
<circle cx="374" cy="138.6" r="1.7" fill="#ddd" stroke="#333" stroke-width="0.9"/>
<path d="M358.4,164.4 l2.6,-2.6 h6.8 l-2.6,2.6 Z M358.4,164.4 v2.8 h6.8 v-2.8 M365.2,167.2 l2.6,-2.6 v-2.8" stroke="#333" stroke-width="0.77" fill="none" stroke-linecap="round" stroke-linejoin="round" />
<path d="M358.8,161 l2.4,-2.2 h6.8" stroke="#777" stroke-width="0.6" fill="none" stroke-linecap="round" stroke-linejoin="round" stroke-dasharray="1,0.8"/>
<path d="M370.4,168 L375.6,162.4" stroke="#333" stroke-width="0.77" fill="none" stroke-linecap="round" stroke-linejoin="round" />
<path d="M357.6,178.2 l2.6,-2.6 h6.8 l-2.6,2.6 Z M357.6,178.2 v2.8 h6.8 v-2.8 M364.4,181 l2.6,-2.6 v-2.8" stroke="#333" stroke-width="0.77" fill="none" stroke-linecap="round" stroke-linejoin="round" />
<path d="M358,174.8 l2.4,-2.2 h6.8" stroke="#777" stroke-width="0.6" fill="none" stroke-linecap="round" stroke-linejoin="round" stroke-dasharray="1,0.8"/>
<path d="M373.2,172.755 v5.4 l1.6,2.4 l1.6,-2.4 v-5.4 M374.8,180.755 h-2.6" stroke="#444" stroke-width="0.77" fill="none" stroke-linecap="round" stroke-linejoin="round" />
<path d="M357.8,187.8 H366.6 V197 H361.8 V192.6 H357.8 Z" stroke="#555" stroke-width="0.77" fill="none" stroke-linecap="round" stroke-linejoin="round" />
<path d="M565.6,163.8 H633" stroke="#666" stroke-width="0.86" fill="none" stroke-linecap="round" stroke-linejoin="round" />
<rect x="600.6" y="172.4" width="32.2" height="11" rx="0.8" fill="#fff" stroke="#333" stroke-width="0.9"/>
<path d="M606.2,175 V181" stroke="#555" stroke-width="0.69" fill="none" stroke-linecap="round" stroke-linejoin="round" />
<rect x="611.3" y="174.7" width="18.8" height="6.3" fill="#6a6a6a"/>
<rect x="615.4" y="189" width="11.6" height="5.4" rx="0.8" fill="#bbb" stroke="#222" stroke-width="1.1"/>
<path d="M617.4,193.6 L619.6,189.8 M620,193.6 L622.2,189.8 M622.6,193.6 L624.8,189.8" stroke="#444" stroke-width="0.6" fill="none" stroke-linecap="round" stroke-linejoin="round" />
<path d="M628.4,194.4 l1.8,0.9 l-1.8,0.9 Z" stroke="#222" stroke-width="0.43" fill="#222" stroke-linecap="round" stroke-linejoin="round" />
<path d="M13,94.4 V104.6 L15.6,102.4 L17.4,106 L18.8,105.4 L17,101.8 L20.4,101.4 Z" stroke="#555" stroke-width="0.52" fill="#555" stroke-linecap="round" stroke-linejoin="round" />
<path d="M9.8,114.4 H22.8 V124.8 H9.8 Z" stroke="#3c3c3c" stroke-width="0.86" fill="none" stroke-linecap="round" stroke-linejoin="round" stroke-dasharray="1.8,1.2"/>
<path d="M10.2,150.6 L22.6,147.8 V157 L10.2,160 Z" stroke="#3c3c3c" stroke-width="0.86" fill="#f2f2f2" stroke-linecap="round" stroke-linejoin="round" />
<path d="M12.2,169 L20.2,166.6 V178.4 L12.2,181 Z" stroke="#3c3c3c" stroke-width="0.86" fill="none" stroke-linecap="round" stroke-linejoin="round" />
<path d="M14,174.6 L15,174.2" stroke="#3c3c3c" stroke-width="0.86" fill="none" stroke-linecap="round" stroke-linejoin="round" />
<path d="M11,190 L21,187.8 V196.4 L11,198.4 Z M16,188.8 V197.4 M11,194.2 L21,192.2" stroke="#3c3c3c" stroke-width="0.77" fill="none" stroke-linecap="round" stroke-linejoin="round" />
<path d="M13,206.4 V218.6 C13,221.4 19,221.4 19,218.6 V206.4" stroke="#3c3c3c" stroke-width="0.86" fill="none" stroke-linecap="round" stroke-linejoin="round" />
<ellipse cx="16" cy="206.4" rx="3" ry="1.4" fill="none" stroke="#3c3c3c" stroke-width="1"/>
<path d="M8.4,226.6 L23.6,231.6 V237 L8.4,229.6 Z" stroke="#3c3c3c" stroke-width="0.86" fill="none" stroke-linecap="round" stroke-linejoin="round" />
<path d="M6.6,251.6 L11.4,246 L16,247.6 L24.6,251.4 L15.4,256.8 Z M6.6,251.6 V252.8 L15.4,258 L24.6,252.6" stroke="#3c3c3c" stroke-width="0.77" fill="none" stroke-linecap="round" stroke-linejoin="round" />
<path d="M10,265 H18 L20.6,267.4 H12.6 Z M12.6,267.4 V269 H20.6 L23,271.2 H15 Z M15,271.2 V272.8 H23 L25,275 H17 Z M10,265 L8.4,266.4" stroke="#3c3c3c" stroke-width="0.73" fill="none" stroke-linecap="round" stroke-linejoin="round" />
<path d="M6,292.4 L12,284 L20.6,283.6 L25.4,290.6 L16,296.4 Z M20.6,283.6 L16,296.4" stroke="#3c3c3c" stroke-width="0.82" fill="none" stroke-linecap="round" stroke-linejoin="round" />
<path d="M20.6,283.6 L23.6,292" stroke="#3c3c3c" stroke-width="0.82" fill="none" stroke-linecap="round" stroke-linejoin="round" />
<path d="M7.2,304.8 L15.6,310.4 L24.8,303.4 L21.6,314 L15.6,310.4 L11.4,316.2 Z" stroke="#3c3c3c" stroke-width="0.82" fill="none" stroke-linecap="round" stroke-linejoin="round" />
<path d="M8.4,327 L18.6,324 L24.6,329.6 L14.6,333 Z M8.4,329 L14.6,335 L24.6,331.6" stroke="#3c3c3c" stroke-width="0.77" fill="none" stroke-linecap="round" stroke-linejoin="round" />
<path d="M8.4,327 L10.4,328" stroke="#3c3c3c" stroke-width="0.77" fill="none" stroke-linecap="round" stroke-linejoin="round" />
<path d="M9.6,343.4 C14,341.6 19,341.6 23.8,342.6 V352.6 C19,352 14,352.4 9.6,354.4 Z M9.6,347 C14,345.2 19,345.2 23.8,346 M9.6,350.6 C14,348.8 19,348.8 23.8,349.4 M14.4,342 V353 M19.2,341.8 V352.4" stroke="#3c3c3c" stroke-width="0.77" fill="none" stroke-linecap="round" stroke-linejoin="round" />
<path d="M10,370.4 C9,365.6 12,361.4 17,360.6 C16.4,364 18,367.4 21.8,369.4 C19,373 14,374.6 10,370.4 Z M17,360.6 C17.4,364.6 16,371 14.2,374" stroke="#3c3c3c" stroke-width="0.82" fill="none" stroke-linecap="round" stroke-linejoin="round" />
<path d="M12.6,386.6 C12,382.6 13.4,380.4 15.6,380.4 C17.8,380.4 18.2,382.6 17.6,386.6 M11.4,386.8 H21.6 V389.8 H11.4 Z M12.2,389.8 V393.8 M21,389.8 V393.8 M14.4,389.8 V392" stroke="#3c3c3c" stroke-width="0.82" fill="none" stroke-linecap="round" stroke-linejoin="round" />
<path d="M9.6,413 V400.4 H14.4 V403.6 H19.6 V400.4 H23.6 V413 Z" stroke="#3c3c3c" stroke-width="0.86" fill="none" stroke-linecap="round" stroke-linejoin="round" />
<path d="M13,406.4 H20.4 V410.4 H13 Z" stroke="#3c3c3c" stroke-width="0.69" fill="#bbb" stroke-linecap="round" stroke-linejoin="round" />
<path d="M6,422.4 L17,419.8 L25.4,427.8 L14.4,432.2 Z M9.6,421.6 C12,424.4 15.4,428 18.2,430.8 M13.4,420.6 C15.6,423.2 19,426.6 21.8,429.4 M8.6,425.2 C12,424.4 16.4,423 19.6,422.2 M11.4,428.6 C15,427.6 19.6,426 22.6,425" stroke="#3c3c3c" stroke-width="0.73" fill="none" stroke-linecap="round" stroke-linejoin="round" />
<path d="M8.2,463 H23.8 M11.2,460 V466 M20.8,460 V466" stroke="#8e8e8e" stroke-width="0.77" fill="none" stroke-linecap="round" stroke-linejoin="round" />
<text x="13.2" y="459.6" font-size="4.2" fill="#8e8e8e" font-family='"Liberation Sans",sans-serif'>1.2</text>
<circle cx="15.4" cy="481" r="4.4" fill="none" stroke="#8e8e8e" stroke-width="0.9"/>
<path d="M9.4,481 H21.4 M15.4,475 V487" stroke="#8e8e8e" stroke-width="0.77" fill="none" stroke-linecap="round" stroke-linejoin="round" />
<text x="19.6" y="477.2" font-size="4.2" fill="#8e8e8e" font-family='"Liberation Sans",sans-serif'>1.2</text>
<text x="9.4" y="506.6" font-size="16.5" fill="#a0a0a0" font-family='"Liberation Sans",sans-serif'>A</text>
<path d="M7.6,524.4 L12.6,519.4 M7.6,521 V524.4 H11" stroke="#8e8e8e" stroke-width="0.77" fill="none" stroke-linecap="round" stroke-linejoin="round" />
<text x="13.4" y="524.8" font-size="11.6" letter-spacing="-1" fill="#8e8e8e" font-family='"Liberation Sans",sans-serif'>A1</text>
<circle cx="41.6" cy="541.2" r="3.9" fill="none" stroke="#3a3a3a" stroke-width="1" stroke-dasharray="19,5.5" transform="rotate(150 41.6 541.2)"/>
<path d="M35.4,538.6 V542.2 H39 M44.2,544 L46.2,546.6" stroke="#3a3a3a" stroke-width="0.86" fill="none" stroke-linecap="round" stroke-linejoin="round" />
<circle cx="55.4" cy="541.2" r="3.9" fill="none" stroke="#b8b8b8" stroke-width="1" stroke-dasharray="19,5.5" transform="rotate(-60 55.4 541.2)"/>
<path d="M61.6,538.6 V542.2 H58" stroke="#b8b8b8" stroke-width="0.86" fill="none" stroke-linecap="round" stroke-linejoin="round" />
<circle cx="71.6" cy="541" r="4.1" fill="none" stroke="#3a3a3a" stroke-width="1"/>
<path d="M69.6,541 H73.6 M71.6,539 V543 M74.6,544 L77.4,546.8" stroke="#3a3a3a" stroke-width="0.86" fill="none" stroke-linecap="round" stroke-linejoin="round" />
<ellipse cx="92.2" cy="541" rx="4.4" ry="2.6" fill="none" stroke="#3a3a3a" stroke-width="1"/>
<path d="M90,544.4 L92,543.4 L91.6,545.6" stroke="#3a3a3a" stroke-width="0.77" fill="none" stroke-linecap="round" stroke-linejoin="round" />
<circle cx="107.6" cy="538.4" r="1" fill="#3a3a3a"/>
<path d="M107.6,539.8 V543 L106,546 M107.6,543 L109.2,546 M105.6,541.6 L107.6,540.4 L109.6,541.8" stroke="#3a3a3a" stroke-width="0.77" fill="none" stroke-linecap="round" stroke-linejoin="round" />
<circle cx="126.8" cy="541.2" r="4" fill="none" stroke="#3a3a3a" stroke-width="1"/>
<path d="M124.4,539.8 L125.6,541 M129.2,539.8 L128,541 M124.4,543.8 L125.6,542.4 M129.2,543 L128,542.2 M129.8,544.2 L132.2,546.8" stroke="#3a3a3a" stroke-width="0.86" fill="none" stroke-linecap="round" stroke-linejoin="round" />
<path d="M198.6,539.9 l1.7,2.1 l-1.7,2.1" stroke="#8a8a8a" stroke-width="1.1" fill="none" stroke-linecap="round" stroke-linejoin="round"/>
<path d="M212.6,542.6 L215.6,539.4 L218.4,541.6 L215.4,544.6 Z M218.4,543.4 C219.6,544 219.6,545.4 218,545.6" stroke="#a8a8a8" stroke-width="0.77" fill="none" stroke-linecap="round" stroke-linejoin="round" />
<path d="M287.4,539.9 l1.7,2.1 l-1.7,2.1" stroke="#8a8a8a" stroke-width="1.1" fill="none" stroke-linecap="round" stroke-linejoin="round"/>
<rect x="300.4" y="539.6" width="10" height="4.6" rx="0.8" fill="none" stroke="#3a3a3a" stroke-width="1"/>
<path d="M302.8,542.6 V544 M305.4,542.6 V544 M308,542.6 V544" stroke="#3a3a3a" stroke-width="0.69" fill="none" stroke-linecap="round" stroke-linejoin="round" />
<path d="M376.8,539.9 l1.7,2.1 l-1.7,2.1" stroke="#111" stroke-width="1.3" fill="none" stroke-linecap="round" stroke-linejoin="round"/>
<path d="M389.4,540.4 L391.6,538 H398.8 L396.6,540.4 Z M389.4,540.4 V546 H396.6 V540.4 M396.6,546 L398.8,543.6 V538 M389.4,542.2 H396.6 M389.4,544 H396.6" stroke="#3a3a3a" stroke-width="0.69" fill="none" stroke-linecap="round" stroke-linejoin="round" />
<path d="M465.2,539.9 l1.7,2.1 l-1.7,2.1" stroke="#111" stroke-width="1.3" fill="none" stroke-linecap="round" stroke-linejoin="round"/>
<rect x="479" y="538.6" width="8.4" height="6.8" rx="0.6" fill="#555" stroke="#333" stroke-width="0.6"/>
<path d="M480.4,540.6 H486 M480.4,543.2 H486" stroke="#ddd" stroke-width="0.69" fill="none" stroke-linecap="round" stroke-linejoin="round" stroke-dasharray="1.3,0.8"/>
<path d="M553.8,539.9 l1.7,2.1 l-1.7,2.1" stroke="#111" stroke-width="1.3" fill="none" stroke-linecap="round" stroke-linejoin="round"/>
<path d="M569.4,537.6 V542.6 L571,545.4 L572.6,542.6 V537.6 M571,545.4 V547.4" stroke="#3a3a3a" stroke-width="0.82" fill="none" stroke-linecap="round" stroke-linejoin="round" />
<path d="M641.8,539.9 l1.7,2.1 l-1.7,2.1" stroke="#111" stroke-width="1.3" fill="none" stroke-linecap="round" stroke-linejoin="round"/>
<rect x="654" y="538.4" width="10.8" height="7.2" rx="0.8" fill="none" stroke="#3a3a3a" stroke-width="1"/>
<rect x="656.4" y="540.4" width="6" height="3.2" fill="#ccc" stroke="#3a3a3a" stroke-width="0.7"/>
<path d="M730.2,539.9 l1.7,2.1 l-1.7,2.1" stroke="#111" stroke-width="1.3" fill="none" stroke-linecap="round" stroke-linejoin="round"/>
<path d="M744,540.6 H747.4 V538.6 H751.6 V541 M744,540.6 V544.6 H747 M748.4,541.6 H752.4 V546.4 H748.4 Z" stroke="#3a3a3a" stroke-width="0.77" fill="none" stroke-linecap="round" stroke-linejoin="round" />
<path d="M818.2,539.9 l1.7,2.1 l-1.7,2.1" stroke="#111" stroke-width="1.3" fill="none" stroke-linecap="round" stroke-linejoin="round"/>
<path d="M831,545.6 L835.4,538 L837.4,541.6 M833.6,545.6 H840.4 V542 L837.4,541.6 M831,545.6 H833.6" stroke="#3a3a3a" stroke-width="0.77" fill="none" stroke-linecap="round" stroke-linejoin="round" />
<path d="M906.4,539.9 l1.7,2.1 l-1.7,2.1" stroke="#111" stroke-width="1.3" fill="none" stroke-linecap="round" stroke-linejoin="round"/>
<path d="M918.6,539 H929.4 M920.2,537.8 L918.6,539 L920.2,540.2 M927.8,537.8 L929.4,539 L927.8,540.2" stroke="#b0b0b0" stroke-width="0.69" fill="none" stroke-linecap="round" stroke-linejoin="round" />
<path d="M919.4,541.6 H928.6 V546.4 H919.4 Z" stroke="#b0b0b0" stroke-width="0.77" fill="none" stroke-linecap="round" stroke-linejoin="round" />
<path d="M994.8,539.9 l1.7,2.1 l-1.7,2.1" stroke="#9a9a9a" stroke-width="1.1" fill="none" stroke-linecap="round" stroke-linejoin="round"/>
<rect x="934.5" y="551.5" width="7.6" height="5.6" rx="0.9" fill="#ececec" stroke="#333" stroke-width="1"/>
<rect x="936.7" y="554.8" width="7.7" height="5.5" rx="0.9" fill="#f4f4f4" stroke="#333" stroke-width="1"/>
</svg>
</body></html>
